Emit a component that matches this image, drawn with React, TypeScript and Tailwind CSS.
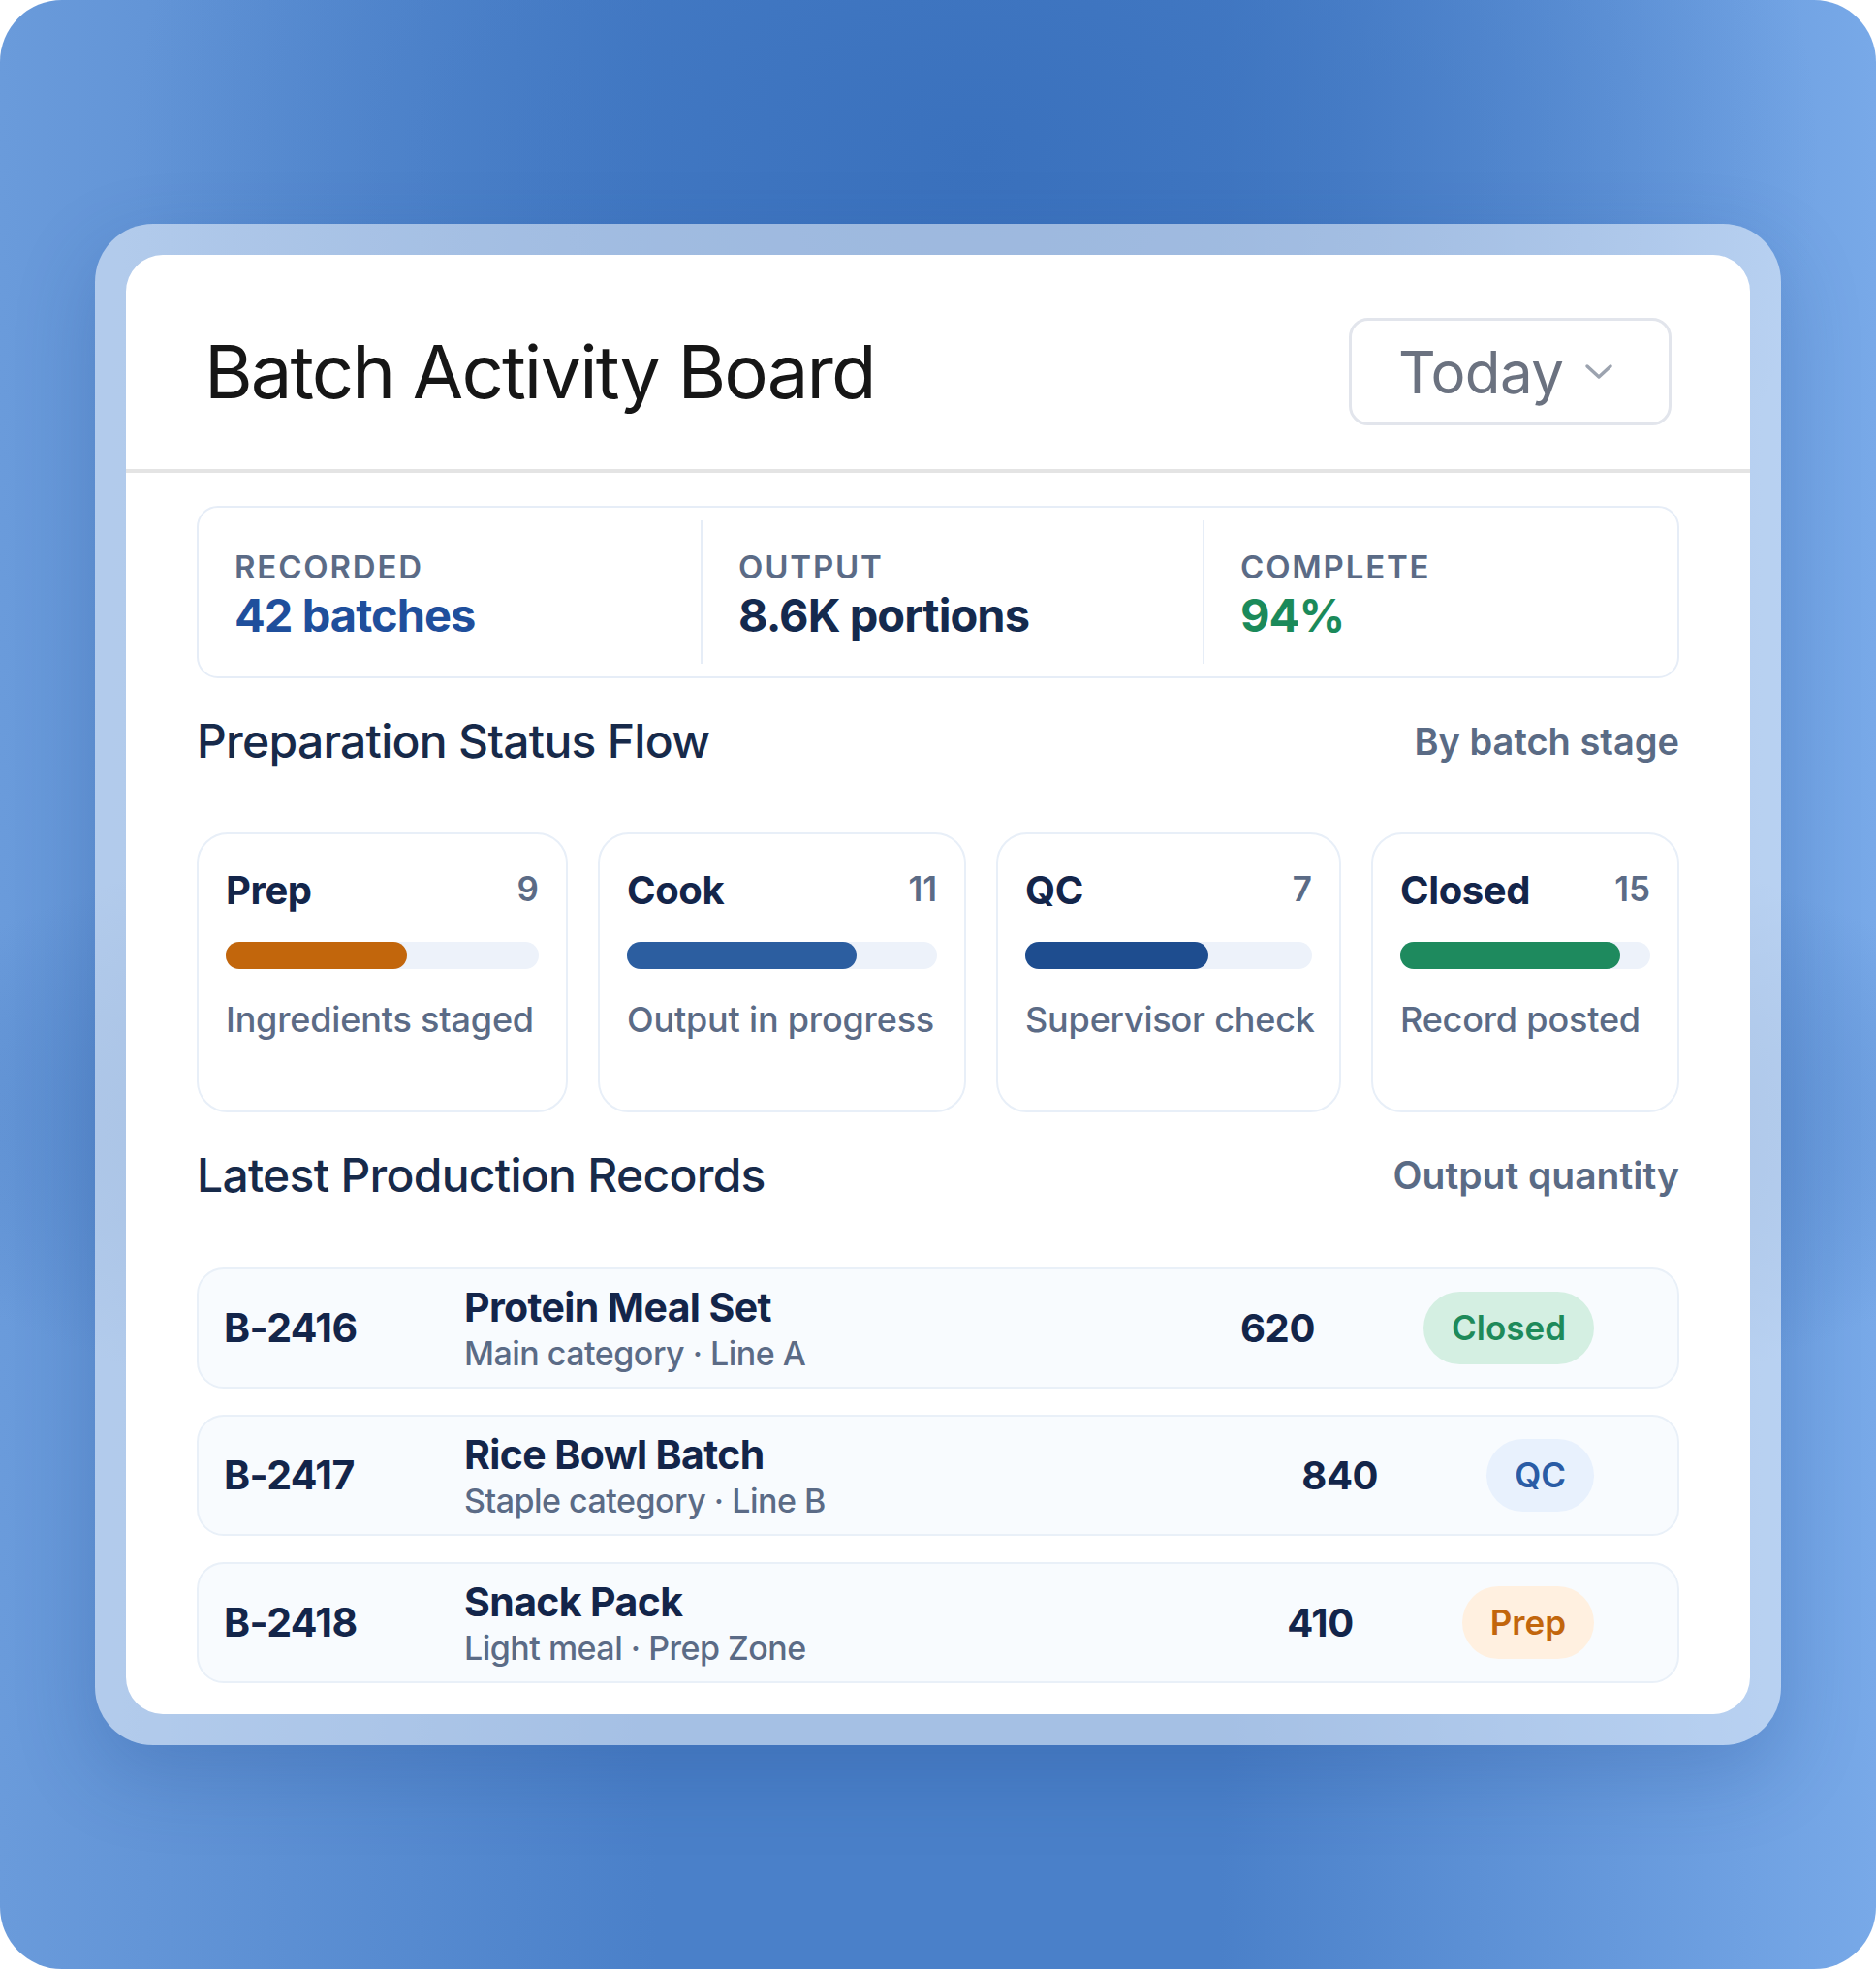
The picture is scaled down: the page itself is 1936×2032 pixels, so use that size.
import React from 'react';

const stages = [
  { id: 'prep', label: 'Prep', count: 9, desc: 'Ingredients staged', pct: 58, color: 'bg-[#c2660c]' },
  { id: 'cook', label: 'Cook', count: 11, desc: 'Output in progress', pct: 74, color: 'bg-[#2c5ea0]' },
  { id: 'qc', label: 'QC', count: 7, desc: 'Supervisor check', pct: 64, color: 'bg-[#1e4d8f]' },
  { id: 'closed', label: 'Closed', count: 15, desc: 'Record posted', pct: 88, color: 'bg-[#1e8a5e]' },
];

const records = [
  { id: 'B-2416', name: 'Protein Meal Set', meta: 'Main category · Line A', qty: 620, status: 'Closed', badge: 'bg-[#d4efe2] text-[#1e8a5a]' },
  { id: 'B-2417', name: 'Rice Bowl Batch', meta: 'Staple category · Line B', qty: 840, status: 'QC', badge: 'bg-[#e8f1fd] text-[#2a5ca5]' },
  { id: 'B-2418', name: 'Snack Pack', meta: 'Light meal · Prep Zone', qty: 410, status: 'Prep', badge: 'bg-[#fff0e0] text-[#c2660c]' },
];

function Stat({ label, value, tone, first }: { label: string; value: string; tone: string; first?: boolean }) {
  return (
    <div className={`flex flex-col justify-center pl-[37px] pt-[8px] my-[13px] ${first ? '' : 'border-l-2 border-[#e6edf7]'}`}>
      <span className="text-[33px] leading-[40px] font-semibold uppercase tracking-[0.055em] text-[#5b6b86]">{label}</span>
      <span className={`text-[47px] leading-[60px] font-bold tracking-[-0.02em] ${tone}`}>{value}</span>
    </div>
  );
}

export default function App() {
  return (
    <div className="w-[1936px] h-[2032px] rounded-[64px] overflow-hidden bg-[radial-gradient(ellipse_45%_35%_at_52%_8%,#3a71bd_0%,transparent_100%),radial-gradient(ellipse_60%_18%_at_50%_57%,#3c6fb6_0%,transparent_100%),linear-gradient(90deg,#6a9bdb_0%,#4a80c9_35%,#4a80c9_65%,#78a9e8_100%)] font-['Inter',sans-serif]">
      <div className="flex justify-center pt-[231px]">
        <div className="w-[1740px] p-[32px] rounded-[60px] bg-white/50 shadow-[0_30px_80px_rgba(30,70,140,0.25)]">
          <div className="bg-white rounded-[38px] overflow-hidden">
            <header className="h-[225px] px-[81px] pt-[20px] flex items-center justify-between border-b-[4px] border-[#e4e4e4]">
              <h1 className="text-[76px] font-normal tracking-[-0.025em] text-[#161616] pb-[2px]">Batch Activity Board</h1>
              <button className="w-[333px] h-[111px] rounded-[20px] border-[3px] border-[#e2e5ec] flex items-center pl-[48px] gap-[22px]">
                <span className="text-[60px] leading-none text-[#6b7280] tracking-[-0.01em]">Today</span>
                <svg width="30" height="17" viewBox="0 0 30 17" fill="none">
                  <polyline points="3,3 15,14 27,3" stroke="#9ca3af" strokeWidth="3.5" strokeLinecap="round" strokeLinejoin="round" />
                </svg>
              </button>
            </header>

            <div className="px-[73px] pt-[34px] pb-[32px]">
              <div className="h-[178px] border-2 border-[#e6edf7] rounded-[22px] grid grid-cols-[518px_518px_1fr]">
                <Stat first label="Recorded" value="42 batches" tone="text-[#1f4f9c]" />
                <Stat label="Output" value="8.6K portions" tone="text-[#142a4e]" />
                <Stat label="Complete" value="94%" tone="text-[#1b8a5a]" />
              </div>

              <div className="flex items-center justify-between mt-[37px] h-[56px]">
                <h2 className="text-[48px] font-medium tracking-[-0.015em] text-[#172a4a]">Preparation Status Flow</h2>
                <span className="text-[38px] font-semibold text-[#5a6b85]">By batch stage</span>
              </div>

              <div className="grid grid-cols-[383px_380px_356px_1fr] gap-[31px] mt-[66px]">
                {stages.map((s) => (
                  <div key={s.id} className="h-[289px] rounded-[32px] border-2 border-[#e8eff8] px-[28px] pt-[36px]">
                    <div className="flex items-start justify-between">
                      <span className="text-[40px] leading-[44px] font-bold tracking-[-0.01em] text-[#13254a]">{s.label}</span>
                      <span className="text-[35px] leading-[40px] font-semibold text-[#5b6b86]">{s.count}</span>
                    </div>
                    <div className="mt-[31px] h-[28px] rounded-full bg-[#edf2fa]">
                      <div className={`h-full rounded-full ${s.color}`} style={{ width: `${s.pct}%` }} />
                    </div>
                    <div className="mt-[30px] text-[36px] leading-[44px] font-medium tracking-[-0.005em] text-[#5b6b86] whitespace-nowrap">{s.desc}</div>
                  </div>
                ))}
              </div>

              <div className="flex items-center justify-between mt-[37px] h-[56px]">
                <h2 className="text-[48px] font-medium tracking-[-0.015em] text-[#172a4a]">Latest Production Records</h2>
                <span className="text-[39px] font-semibold text-[#5a6b85]">Output quantity</span>
              </div>

              <div className="flex flex-col gap-[27px] mt-[67px]">
                {records.map((r) => (
                  <div key={r.id} className="h-[125px] rounded-[28px] border-2 border-[#e9f0f8] bg-[#f8fbfe] flex items-center pl-[26px] pr-[86px]">
                    <span className="w-[248px] shrink-0 text-[41px] font-bold tracking-[-0.015em] text-[#13254a]">{r.id}</span>
                    <div className="flex-1 flex flex-col">
                      <span className="text-[41px] leading-[52px] font-bold tracking-[-0.015em] text-[#13254a]">{r.name}</span>
                      <span className="text-[34px] leading-[44px] font-medium tracking-[-0.015em] text-[#5b6b86]">{r.meta}</span>
                    </div>
                    <span className="text-[40px] font-bold tracking-[-0.01em] text-[#13254a]">{r.qty}</span>
                    <span className={`ml-[112px] h-[75px] px-[29px] rounded-full flex items-center text-[35px] font-semibold ${r.badge}`}>{r.status}</span>
                  </div>
                ))}
              </div>
            </div>
          </div>
        </div>
      </div>
    </div>
  );
}
